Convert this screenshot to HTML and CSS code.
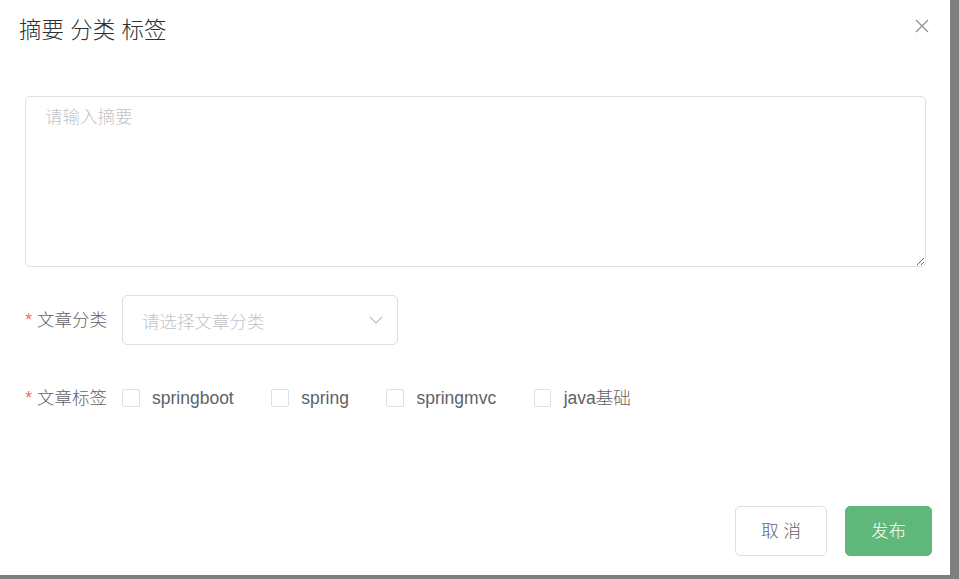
FILE: index.html
```html
<!DOCTYPE html>
<html lang="zh-CN">
<head>
<meta charset="utf-8">
<title>摘要 分类 标签</title>
<link rel="stylesheet" href="styles.css">
</head>
<body>
<div class="dialog">
  <div class="dialog-header">
    <span class="dialog-title">摘要 分类 标签</span>
    <button class="dialog-close" type="button" aria-label="Close">
      <svg width="14" height="14" viewBox="0 0 14 14"><path d="M1 1 L13 13 M13 1 L1 13" stroke="#909399" stroke-width="1.4" fill="none"/></svg>
    </button>
  </div>
  <div class="dialog-body">
    <textarea class="summary" placeholder="请输入摘要"></textarea>
    <div class="form-item">
      <label class="form-label required">文章分类</label>
      <div class="select">
        <span class="select-placeholder">请选择文章分类</span>
        <svg class="select-arrow" width="14" height="8" viewBox="0 0 14 8"><path d="M1 1 L7 7 L13 1" stroke="#c0c4cc" stroke-width="1.3" fill="none"/></svg>
      </div>
    </div>
    <div class="form-item">
      <label class="form-label required">文章标签</label>
      <div class="checkbox-group">
        <label class="checkbox"><span class="checkbox-box"></span><span class="checkbox-label">springboot</span></label>
        <label class="checkbox"><span class="checkbox-box"></span><span class="checkbox-label">spring</span></label>
        <label class="checkbox"><span class="checkbox-box"></span><span class="checkbox-label">springmvc</span></label>
        <label class="checkbox"><span class="checkbox-box"></span><span class="checkbox-label">java基础</span></label>
      </div>
    </div>
  </div>
  <div class="dialog-footer">
    <button class="btn btn-default" type="button">取 消</button>
    <button class="btn btn-primary" type="button">发布</button>
  </div>
</div>
</body>
</html>
```
FILE: styles.css
```css
* { box-sizing: border-box; }
html, body {
  margin: 0;
  padding: 0;
}
body {
  width: 959px;
  height: 579px;
  overflow: hidden;
  background: #7f7f7f;
  font-family: "Liberation Sans", "Noto Sans CJK SC", sans-serif;
  font-size: 17.5px;
  font-weight: 300;
  color: #606266;
}
.dialog {
  width: 950px;
  height: 575px;
  background: #fff;
  display: flex;
  flex-direction: column;
}
.dialog-header {
  display: flex;
  justify-content: space-between;
  align-items: flex-start;
  height: 62px;
  padding: 16px 21px 0 19px;
}
.dialog-title {
  font-size: 22.5px;
  line-height: 30px;
  color: #303133;
}
.dialog-close {
  margin: 3px 0 0 0;
  padding: 0;
  border: 0;
  background: none;
  width: 14px;
  height: 14px;
  display: block;
}
.dialog-close svg { display: block; }
.dialog-body {
  padding: 34px 24px 0 25px;
}
.summary {
  display: block;
  width: 901px;
  height: 171px;
  margin: 0;
  padding: 7px 19px;
  border: 1px solid #dcdfe6;
  border-radius: 5px;
  font-family: "Liberation Sans", "Noto Sans CJK SC", sans-serif;
  font-size: 17.5px;
  font-weight: 300;
  line-height: 1.5;
  color: #606266;
  outline: none;
}
.summary::placeholder { color: #c0c4cc; }
.form-item {
  display: flex;
  align-items: center;
  height: 50px;
  margin-top: 28px;
}
.form-label {
  width: 97px;
  flex: none;
  text-align: right;
  padding-right: 15px;
  color: #606266;
  line-height: 50px;
}
.form-label.required::before {
  content: "*";
  color: #f56c6c;
  margin-right: 5px;
}
.select {
  width: 276px;
  height: 50px;
  border: 1px solid #dcdfe6;
  border-radius: 5px;
  display: flex;
  align-items: center;
  justify-content: space-between;
  padding: 0 14px 0 19px;
}
.select-placeholder { color: #c0c4cc; }
.select-arrow { display: block; margin-top: -1px; }
.checkbox-group {
  display: flex;
  align-items: center;
}
.checkbox {
  display: flex;
  align-items: center;
  margin-right: 37.5px;
}
.checkbox-box {
  width: 17.5px;
  height: 17.5px;
  border: 1px solid #dcdfe6;
  border-radius: 2px;
  background: #fff;
}
.checkbox-label {
  padding-left: 12.5px;
  color: #606266;
  line-height: 20px;
}
.dialog-footer {
  margin-top: auto;
  display: flex;
  justify-content: flex-end;
  gap: 18px;
  padding: 0 18px 19px 0;
}
.btn {
  height: 50px;
  padding: 0 25px;
  border-radius: 5px;
  font-family: "Liberation Sans", "Noto Sans CJK SC", sans-serif;
  font-size: 17.5px;
  font-weight: 300;
  line-height: 48px;
  cursor: pointer;
}
.btn-default {
  background: #fff;
  border: 1px solid #dcdfe6;
  color: #606266;
}
.btn-primary {
  background: #5fb87a;
  border: 1px solid #5fb87a;
  color: #fff;
}
```
